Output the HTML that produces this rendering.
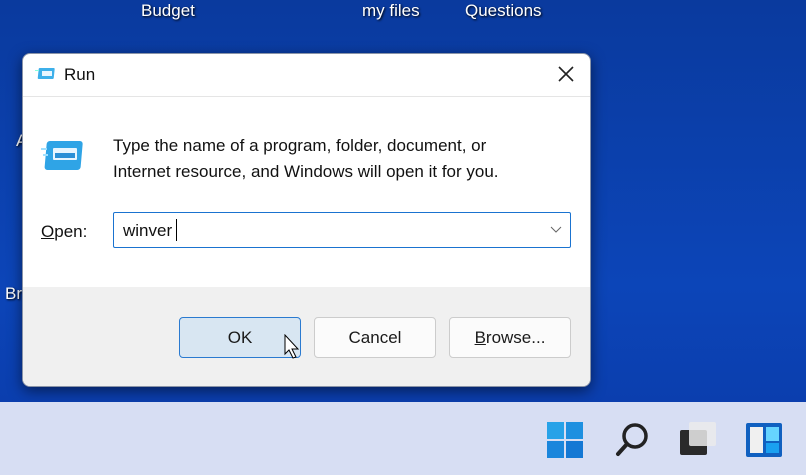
<!DOCTYPE html>
<html><head><style>
body{margin:0;width:806px;height:475px;overflow:hidden;position:relative;font-family:"Liberation Sans",sans-serif;background:linear-gradient(180deg,#0a3a9e 0%,#0c45b8 60%,#0a3aa8 100%);}
.dt{position:absolute;color:#fff;font-size:17px;text-shadow:1px 1px 2px #000;}
.dlg{position:absolute;left:22px;top:53px;width:567px;height:332px;background:#fff;border-radius:8px;border:1px solid #8a94a8;overflow:hidden;box-shadow:0 4px 14px rgba(0,0,0,.5);}
.foot{position:absolute;left:0;top:233px;width:100%;height:101px;background:#f0f0f0;}
.btn{position:absolute;top:263px;width:122px;height:41px;border:1px solid #ccc;border-radius:4px;background:#fbfbfb;font-size:17px;text-align:center;line-height:40px;color:#1a1a1a;box-sizing:border-box;}
.tb{position:absolute;left:0;top:402px;width:806px;height:73px;background:#d7def3;}
</style></head><body>
<div class="dt" style="left:141px;top:1px">Budget</div>
<div class="dt" style="left:362px;top:1px">my files</div>
<div class="dt" style="left:465px;top:1px">Questions</div>
<div class="dt" style="left:16px;top:131px">A</div>
<div class="dt" style="left:5px;top:284px">Bri</div>
<div class="dlg">
 <svg style="position:absolute;left:12px;top:12px" width="22" height="16"><rect x="4" y="2" width="16" height="11" rx="1" fill="#3db0ea" transform="skewX(-6)"/><rect x="7" y="5" width="10" height="5" fill="#e8f6ff"/><rect x="0" y="4" width="4" height="1" fill="#8fd"/></svg>
 <div style="position:absolute;left:41px;top:11px;font-size:17px;color:#111">Run</div>
 <svg style="position:absolute;left:535px;top:12px" width="16" height="16"><path d="M1 1L15 15M15 1L1 15" stroke="#222" stroke-width="1.6"/></svg>
 <div style="position:absolute;left:0;top:42px;width:100%;height:1px;background:#e5e5e5"></div>
 <svg style="position:absolute;left:18px;top:86px" width="46" height="32"><rect x="6" y="1" width="36" height="29" rx="3" fill="#2fa4e6" transform="skewX(-5)"/><rect x="12" y="8" width="24" height="12" rx="1" fill="#e6f5ff"/><rect x="14" y="13" width="20" height="5" fill="#2a8fd6"/><rect x="0" y="8" width="6" height="2" fill="#9fe0ff"/><rect x="2" y="14" width="5" height="2" fill="#9fe0ff"/></svg>
 <div style="position:absolute;left:90px;top:79px;font-size:17px;line-height:26px;color:#111">Type the name of a program, folder, document, or<br>Internet resource, and Windows will open it for you.</div>
 <div style="position:absolute;left:18px;top:168px;font-size:17px;color:#111"><u>O</u>pen:</div>
 <div style="position:absolute;left:90px;top:158px;width:458px;height:36px;border:1px solid #1a73d0;box-sizing:border-box;border-radius:2px;background:#fff">
  <span style="position:absolute;left:9px;top:8px;font-size:17px;color:#111">winver</span>
  <span style="position:absolute;left:62px;top:6px;width:1px;height:22px;background:#000"></span>
  <svg style="position:absolute;left:436px;top:13px" width="12" height="8"><path d="M1 1L6 6L11 1" stroke="#666" fill="none"/></svg>
 </div>
 <div class="foot"></div>
 <div class="btn" style="left:156px;background:#d8e6f2;border-color:#2a7ad0">OK</div>
 <div class="btn" style="left:291px">Cancel</div>
 <div class="btn" style="left:426px"><u>B</u>rowse...</div>
 <svg style="position:absolute;left:261px;top:280px" width="16" height="26"><path d="M1 1L1 20L5 16L9 24L12 23L8 15L14 15Z" fill="#fff" stroke="#000"/></svg>
</div>
<div class="tb">
 <svg style="position:absolute;left:547px;top:20px" width="36" height="36"><rect x="0" y="0" width="17" height="17" fill="#27a2e8"/><rect x="19" y="0" width="17" height="17" fill="#1e90e0"/><rect x="0" y="19" width="17" height="17" fill="#1a86dc"/><rect x="19" y="19" width="17" height="17" fill="#1478d4"/></svg>
 <svg style="position:absolute;left:615px;top:20px" width="34" height="36"><circle cx="20" cy="14" r="11" stroke="#222" stroke-width="3.5" fill="none"/><path d="M12 22L3 32" stroke="#222" stroke-width="4" stroke-linecap="round"/></svg>
 <div style="position:absolute;left:680px;top:28px;width:27px;height:25px;background:#2a2a2a;border-radius:2px"></div>
 <div style="position:absolute;left:689px;top:20px;width:27px;height:24px;background:rgba(235,235,235,.85);border-radius:2px"></div>
 <div style="position:absolute;left:746px;top:21px;width:36px;height:34px;background:#1060c0;border-radius:2px"></div>
 <div style="position:absolute;left:750px;top:25px;width:13px;height:26px;background:#f0f0f0"></div>
 <div style="position:absolute;left:766px;top:25px;width:13px;height:14px;background:#66d4ff"></div>
 <div style="position:absolute;left:766px;top:41px;width:13px;height:10px;background:#1aa0f0"></div>
</div>
</body></html>
